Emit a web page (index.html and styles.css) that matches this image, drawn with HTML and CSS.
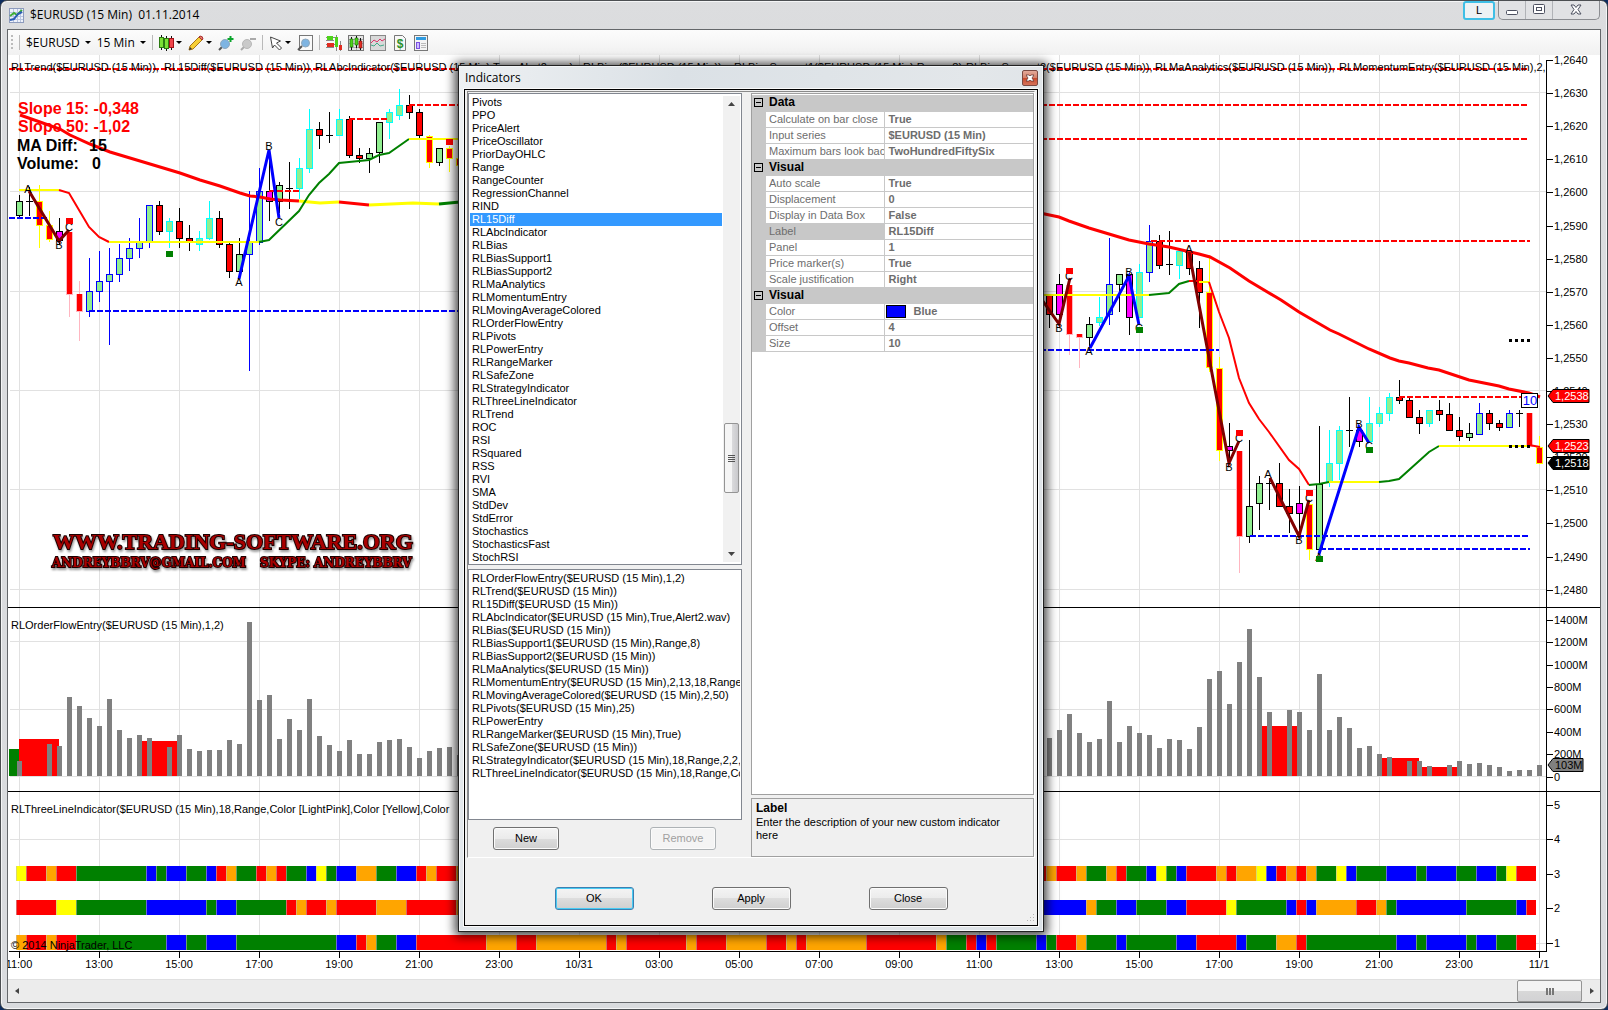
FILE: index.html
```html
<!DOCTYPE html>
<html lang="en">
<head>
<meta charset="utf-8">
<title>$EURUSD (15 Min) 01.11.2014</title>
<link rel="stylesheet" href="styles.css">
</head>
<body>
<main class="window">
  <header class="titlebar">
    <svg class="app-icon" width="15" height="15" viewBox="0 0 15 15"><rect x=".5" y=".5" width="14" height="14" fill="#eef2fb" stroke="#8d9bbd"/><path d="M4.500 1v13M8.500 1v13M11.500 1v13M1 4.500h13M1 8.500h13M1 11.500h13" stroke="#b9c5e0"/><path d="M1 8l4-3 3 2 5-5" fill="none" stroke="#3fae35" stroke-width="2"/><path d="M1 12l4-1 4-5 4-2" fill="none" stroke="#2b5cb5" stroke-width="2"/></svg>
    <h1 class="window-title">$EURUSD (15 Min)&nbsp; 01.11.2014</h1>
    <div class="window-buttons">
      <button class="link-button">L</button>
      <div class="caption-group">
        <button aria-label="Minimize"><svg width="14" height="14" viewBox="0 0 14 14"><rect x="1.500" y="7.500" width="11" height="4" rx="1" fill="#fff" stroke="#4d5160"/></svg></button>
        <button aria-label="Maximize"><svg width="14" height="14" viewBox="0 0 14 14"><rect x="1.500" y="1.500" width="11" height="9" rx="1" fill="#fff" stroke="#4d5160"/><rect x="4.500" y="4.500" width="5" height="3" fill="#fff" stroke="#4d5160"/></svg></button>
        <button class="caption-close" aria-label="Close window"><svg width="14" height="14" viewBox="0 0 14 14"><path d="M2 2h3l2 2.500L9 2h3L9 6.500l3 4.500H9L7 8.500 5 11H2l3-4.500z" fill="#fff" stroke="#4d5160"/></svg></button>
      </div>
    </div>
  </header>
  <div class="client">
    <div class="toolbar">
      <span class="grip"></span><span class="divider"></span>
      <button class="tool-text tool-symbol">$EURUSD <i class="caret"></i></button>
      <button class="tool-text tool-period">15 Min <i class="caret"></i></button>
      <span class="divider"></span>
      <button class="tool" aria-label="Chart style"><svg width="15" height="16" viewBox="0 0 15 16"><path d="M2.500 0v15M7.500 1v15M12.500 1v14" stroke="#111"/><rect x=".5" y="2.500" width="4" height="10" fill="#7be035" stroke="#2c7a12"/><rect x="5.500" y="3.500" width="4" height="10" fill="#7be035" stroke="#2c7a12"/><rect x="10.500" y="3.500" width="4" height="9" fill="#f0444a" stroke="#a01217"/></svg><i class="caret"></i></button>
      <button class="tool" aria-label="Drawing tools"><svg width="16" height="16" viewBox="0 0 16 16"><path d="M2 11L11 2l3 3-9 9-4 1z" fill="#f7cf36" stroke="#a8741a"/><path d="M11 2l3 3 1-1q0-3-3-3z" fill="#e77a6a" stroke="#a33"/><path d="M1 15l1-3 2 2z" fill="#333"/></svg><i class="caret"></i></button>
      <button class="tool tool-zoom" aria-label="Zoom in"><svg width="16" height="16" viewBox="0 0 16 16"><path d="M1 15l4-4" stroke="#555" stroke-width="2"/><circle cx="7" cy="9" r="4.500" fill="#7eb4e2" stroke="#8fa8bd"/><path d="M12.500 1v6M9.500 4h6" stroke="#0ba52c" stroke-width="2"/></svg></button>
      <button class="tool tool-zoom" aria-label="Zoom out"><svg width="16" height="16" viewBox="0 0 16 16"><path d="M1 15l4-4" stroke="#aaa" stroke-width="2"/><circle cx="7" cy="9" r="4.500" fill="#c9c9c9" stroke="#b7b7b7"/><path d="M10 4h6" stroke="#aaa" stroke-width="2"/></svg></button>
      <span class="divider"></span>
      <button class="tool" aria-label="Cursor"><svg width="14" height="16" viewBox="0 0 14 16"><path d="M1.500 2l10 4-4 2 5 5-2 2-5-5-2 3z" fill="#fff" stroke="#444"/></svg><i class="caret"></i></button>
      <button class="tool" aria-label="Data box"><svg width="16" height="16" viewBox="0 0 16 16"><rect x="2.500" y=".5" width="13" height="15" fill="#fafafa" stroke="#777"/><path d="M1 15l4-4" stroke="#555" stroke-width="2"/><circle cx="8.500" cy="8" r="4" fill="#7eb4e2" stroke="#8fa8bd"/></svg></button>
      <span class="divider"></span>
      <button class="tool" aria-label="Data series"><svg width="16" height="16" viewBox="0 0 16 16"><path d="M0 2.500h10M0 9.500h9M10.500 0v16M14.500 6v10M0 5.500h8M0 12.500h8" stroke="#888"/><path d="M1 1h6v4H1z" fill="#4ed31a"/><path d="M1 8h7v4H1zM13 10h3v5h-3z" fill="#e22b20"/><path d="M9 2h3v10H9z" fill="#4ed31a"/></svg></button>
      <button class="tool" aria-label="Indicators"><svg width="16" height="16" viewBox="0 0 16 16"><rect x=".5" y=".5" width="15" height="15" fill="#e5e5e5" stroke="#777"/><path d="M1 4.500h14M1 8.500h14M1 12.500h14M8.500 1v14" stroke="#aaa"/><path d="M3.500 2v13M8.500 1v12M12.500 3v12" stroke="#111"/><path d="M2 4h3v8H2zM7 3h3v7H7z" fill="#4ed31a" stroke="#1d6b0a" stroke-width=".6"/><path d="M11 6h3v7h-3z" fill="#e22b20" stroke="#711" stroke-width=".6"/></svg></button>
      <button class="tool" aria-label="Strategies"><svg width="16" height="16" viewBox="0 0 16 16"><rect x=".5" y=".5" width="15" height="15" fill="#d9d9d9" stroke="#888"/><path d="M1 8l3-3 3 2 3-3 2 2 3-2" fill="none" stroke="#d36"/><path d="M1 10l3 1 3-3 3 3 4-1" fill="none" stroke="#4a8"/></svg></button>
      <button class="tool" aria-label="Performance"><svg width="16" height="16" viewBox="0 0 16 16"><path d="M2.500.5h8l3 3v12h-11z" fill="#f7f7f7" stroke="#777"/><text x="8" y="13" text-anchor="middle" class="dollar">$</text></svg></button>
      <button class="tool" aria-label="Properties"><svg width="14" height="16" viewBox="0 0 14 16"><rect x=".5" y=".5" width="13" height="15" fill="#f4f4f4" stroke="#777"/><path d="M2 2h10v3H2z" fill="#2f9be0"/><rect x="2.500" y="7.500" width="3" height="6" fill="#cdbcff" stroke="#7a4fe0"/><path d="M7 8.500h5M7 10.500h5M7 12.500h5" stroke="#bbb"/></svg></button>
    </div>
    <svg class="chart" id="chart" viewBox="8 55 1592 924" role="img" aria-label="EURUSD price chart"></svg>
    <div class="hscroll">
      <button class="hscroll-arrow" aria-label="Scroll left"><svg width="4" height="6" viewBox="0 0 4 6"><path d="M4 0v6L0 3z" fill="#444"/></svg></button>
      <div class="hscroll-thumb"><i></i><i></i><i></i></div>
      <button class="hscroll-arrow" aria-label="Scroll right"><svg width="4" height="6" viewBox="0 0 4 6"><path d="M0 0v6l4-3z" fill="#444"/></svg></button>
    </div>
  </div>
</main>

<section class="dialog" role="dialog" aria-labelledby="dialog-title">
  <header class="dialog-title">
    <h2 id="dialog-title">Indicators</h2>
    <button class="dialog-close" aria-label="Close dialog"><svg width="8" height="8" viewBox="0 0 8 8"><path d="M0 1h3l1 1 1-1h3L6 4l2 3H5L4 6 3 7H0l2-3z" fill="#fff" stroke="#54292a" stroke-width=".7"/></svg></button>
  </header>
  <div class="dialog-body">
    <div class="dialog-main">
      <div class="left-column">
        <div class="listbox available">
          <select size="36" aria-label="Available indicators">
            <option>Pivots</option><option>PPO</option><option>PriceAlert</option><option>PriceOscillator</option><option>PriorDayOHLC</option><option>Range</option><option>RangeCounter</option><option>RegressionChannel</option><option>RIND</option><option selected>RL15Diff</option><option>RLAbcIndicator</option><option>RLBias</option><option>RLBiasSupport1</option><option>RLBiasSupport2</option><option>RLMaAnalytics</option><option>RLMomentumEntry</option><option>RLMovingAverageColored</option><option>RLOrderFlowEntry</option><option>RLPivots</option><option>RLPowerEntry</option><option>RLRangeMarker</option><option>RLSafeZone</option><option>RLStrategyIndicator</option><option>RLThreeLineIndicator</option><option>RLTrend</option><option>ROC</option><option>RSI</option><option>RSquared</option><option>RSS</option><option>RVI</option><option>SMA</option><option>StdDev</option><option>StdError</option><option>Stochastics</option><option>StochasticsFast</option><option>StochRSI</option>
          </select>
          <div class="vscroll">
            <svg width="7" height="4" viewBox="0 0 7 4"><path d="M0 4h7L3.500 0z" fill="#444"/></svg>
            <div class="vscroll-thumb"><i></i><i></i><i></i><i></i></div>
            <svg width="7" height="4" viewBox="0 0 7 4"><path d="M0 0h7L3.500 4z" fill="#444"/></svg>
          </div>
        </div>
        <div class="listbox applied">
          <select size="18" aria-label="Applied indicators">
            <option>RLOrderFlowEntry($EURUSD (15 Min),1,2)</option><option>RLTrend($EURUSD (15 Min))</option><option>RL15Diff($EURUSD (15 Min))</option><option>RLAbcIndicator($EURUSD (15 Min),True,Alert2.wav)</option><option>RLBias($EURUSD (15 Min))</option><option>RLBiasSupport1($EURUSD (15 Min),Range,8)</option><option>RLBiasSupport2($EURUSD (15 Min))</option><option>RLMaAnalytics($EURUSD (15 Min))</option><option>RLMomentumEntry($EURUSD (15 Min),2,13,18,Range,R</option><option>RLMovingAverageColored($EURUSD (15 Min),2,50)</option><option>RLPivots($EURUSD (15 Min),25)</option><option>RLPowerEntry</option><option>RLRangeMarker($EURUSD (15 Min),True)</option><option>RLSafeZone($EURUSD (15 Min))</option><option>RLStrategyIndicator($EURUSD (15 Min),18,Range,2,2,5)</option><option>RLThreeLineIndicator($EURUSD (15 Min),18,Range,Colo</option>
          </select>
        </div>
        <div class="list-actions">
          <button class="button small">New</button>
          <button class="button small" disabled>Remove</button>
        </div>
      </div>
      <div class="right-column">
        <div class="property-grid">
          <table>
            <colgroup><col class="col-gutter"><col class="col-name"><col></colgroup>
            <tbody>
              <tr class="group"><td><span class="collapse"></span></td><th colspan="2">Data</th></tr>
              <tr><td></td><th>Calculate on bar close</th><td>True</td></tr>
              <tr><td></td><th>Input series</th><td>$EURUSD (15 Min)</td></tr>
              <tr><td></td><th>Maximum bars look back</th><td>TwoHundredFiftySix</td></tr>
            </tbody>
            <tbody>
              <tr class="group"><td><span class="collapse"></span></td><th colspan="2">Visual</th></tr>
              <tr><td></td><th>Auto scale</th><td>True</td></tr>
              <tr><td></td><th>Displacement</th><td>0</td></tr>
              <tr><td></td><th>Display in Data Box</th><td>False</td></tr>
              <tr class="current"><td></td><th>Label</th><td>RL15Diff</td></tr>
              <tr><td></td><th>Panel</th><td>1</td></tr>
              <tr><td></td><th>Price marker(s)</th><td>True</td></tr>
              <tr><td></td><th>Scale justification</th><td>Right</td></tr>
            </tbody>
            <tbody>
              <tr class="group"><td><span class="collapse"></span></td><th colspan="2">Visual</th></tr>
              <tr><td></td><th>Color</th><td class="color-cell"><span class="swatch"></span>Blue</td></tr>
              <tr><td></td><th>Offset</th><td>4</td></tr>
              <tr><td></td><th>Size</th><td>10</td></tr>
            </tbody>
          </table>
        </div>
        <div class="description">
          <h3>Label</h3>
          <p>Enter the description of your new custom indicator here</p>
        </div>
      </div>
    </div>
    <footer class="dialog-footer">
      <button class="button default">OK</button>
      <button class="button">Apply</button>
      <button class="button">Close</button>
      <svg class="resize-grip" width="9" height="9" viewBox="0 0 9 9"><path d="M7 1h1v1H7zM4 4h1v1H4zM7 4h1v1H7zM1 7h1v1H1zM4 7h1v1H4zM7 7h1v1H7z" fill="#b4b4b4"/></svg>
    </footer>
  </div>
</section>
<script src="chart.js"></script>
</body>
</html>
```
FILE: styles.css
```css
* { box-sizing: border-box; }

body {
  margin: 0;
  min-height: 100vh;
  display: flex;
  background: #0d2c5e;
  font: 11px/13px "Liberation Sans", Arial, sans-serif;
  color: #000;
}

button {
  margin: 0;
  padding: 0;
  border: 0;
  background: none;
  font: inherit;
  color: inherit;
}

h1, h2, h3, p { margin: 0; font-weight: normal; }

.window {
  flex: 1;
  display: flex;
  flex-direction: column;
  padding: 0 7px 6px;
  border: 1px solid #4c4f52;
  border-radius: 7px;
  background: linear-gradient(#dcdddf, #dbdcde 30px, #d9dbde);
  box-shadow: inset 0 0 0 1px #f4f5f6;
}

/* Title bar */
.titlebar {
  display: flex;
  height: 28px;
  align-items: center;
  gap: 6px;
  padding-left: 1px;
}
.window-title {
  flex: 1;
  font: 12px/16px "Open Sans", sans-serif;
}
.window-buttons { display: flex; align-self: flex-start; gap: 3px; }
.link-button {
  width: 32px;
  height: 19px;
  border: 2px solid #3fbfe6;
  border-radius: 3px;
  background: #eef2f4;
}
.caption-group {
  display: flex;
  height: 19px;
  border: 1px solid #8b8d91;
  border-top: 0;
  border-radius: 0 0 5px 5px;
  background: #e1e2e4;
}
.caption-group button {
  width: 27px;
  display: grid;
  place-items: center;
  border-right: 1px solid #b1b3b7;
}
.caption-group .caption-close { width: 46px; border-right: 0; }

/* Client area */
.client {
  flex: 1;
  display: flex;
  flex-direction: column;
  border: 1px solid #64676a;
  margin: 0 -1px;
  background: #fff;
}
.toolbar {
  display: flex;
  align-items: center;
  height: 25px;
  padding-left: 3px;
  gap: 6px;
  background: linear-gradient(#fcfcfc, #f1f1f1);
}
.grip { width: 2px; height: 15px; background: repeating-linear-gradient(#bbb 0 2px, transparent 2px 4px); }
.divider { width: 1px; height: 15px; background: #b9b9b9; }
.tool-text {
  display: flex;
  align-items: center;
  gap: 5px;
  font: 12px/16px "Open Sans", sans-serif;
}
.tool { display: flex; align-items: center; gap: 2px; }
.caret {
  width: 0;
  border: 3px solid transparent;
  border-top-color: #000;
  border-bottom: 0;
}
.dollar { font: bold 12px "Liberation Sans", sans-serif; fill: #2a8f2a; }

.chart { display: block; width: 100%; flex: 1; }
.chart text { font: 11px "Liberation Sans", Arial, sans-serif; }
.chart .stat { font-size: 16px; font-weight: bold; }
.chart .box { font-size: 13px; fill: #0000ff; }
.chart .brand, .chart .contact {
  fill: #a80000;
  stroke: #1c0000;
  stroke-width: 2px;
  paint-order: stroke;
  filter: drop-shadow(1px 2px 1px rgba(0, 0, 0, .4));
}
.chart .brand { font: bold 22px "Liberation Serif", serif; }
.chart .contact { font: bold 12px "DejaVu Serif", serif; }

.hscroll {
  display: flex;
  height: 23px;
  border-top: 1px solid #e0e0e0;
  background: #ececec;
}
.hscroll-arrow { width: 17px; display: grid; place-items: center; }
.hscroll-thumb {
  width: 65px;
  height: 22px;
  margin-left: auto;
  margin-right: 1px;
  display: flex;
  align-items: center;
  justify-content: center;
  gap: 1px;
  border: 1px solid #949494;
  border-radius: 2px;
  background: linear-gradient(#f3f3f3 50%, #d8d8d8 50%, #d2d2d4);
}
.hscroll-thumb i { width: 2px; height: 7px; background: #777; }

/* Indicators dialog */
.dialog {
  position: absolute;
  left: 458px;
  top: 65px;
  width: 586px;
  display: flex;
  flex-direction: column;
  padding: 0 5px 5px;
  border: 1px solid #222;
  background: linear-gradient(100deg, #eef1f3, #dbe1e6 30%, #e3e7ea 70%, #dbe1e6) #dde3e8;
  box-shadow: inset 0 0 0 1px #f3f6f8, 0 1px 10px 3px rgba(0, 0, 0, .75);
}
.dialog-title {
  display: flex;
  align-items: center;
  justify-content: space-between;
  height: 23px;
  padding-left: 1px;
}
.dialog-title h2 { font: 12px/16px "Open Sans", sans-serif; }
.dialog-close {
  width: 16px;
  height: 16px;
  display: grid;
  place-items: center;
  border: 1px solid #7b4942;
  border-radius: 2px;
  background: linear-gradient(#e3aa9b, #d47f67 50%, #c8482b 50%, #d5735a);
}
.dialog-body {
  border: 1px solid #000;
  outline: 1px solid #fafafa;
  padding: 1px 2px;
  background: #f0f0f0;
}
.dialog-main {
  display: flex;
  gap: 9px;
  padding: 1px 0 0;
  border: 1px solid #8a8a8a;
  border-right-color: #fff;
  border-bottom-color: #fff;
}
.left-column { width: 274px; display: flex; flex-direction: column; gap: 4px; }
.listbox {
  display: flex;
  padding: 2px 1px;
  border: 1px solid #828790;
  background: #fff;
}
.available { height: 472px; }
.applied { height: 251px; }
.listbox select {
  flex: 1;
  min-width: 0;
  height: 100%;
  padding: 0;
  border: 0;
  outline: 0;
  overflow: hidden;
  background: #fff;
  color: #000;
  font: inherit;
  appearance: none;
}
.listbox option {
  height: 13px;
  min-height: 13px;
  padding: 0 2px;
  line-height: 13px;
}
.listbox option:checked { background: #3399ff linear-gradient(#3399ff, #3399ff); color: #fff; }
.vscroll {
  width: 17px;
  margin-left: 1px;
  display: flex;
  flex-direction: column;
  align-items: center;
  justify-content: space-between;
  padding: 6px 1px;
  background: #f1f1f1;
}
.vscroll-thumb {
  width: 15px;
  height: 70px;
  margin-top: 317px;
  display: flex;
  flex-direction: column;
  align-items: center;
  justify-content: center;
  gap: 1px;
  border: 1px solid #949494;
  border-radius: 2px;
  background: linear-gradient(90deg, #f5f5f5 50%, #dcdcde 50%, #c9c9cc);
}
.vscroll-thumb i { width: 7px; height: 1px; background: #555; }
.vscroll-thumb + svg { margin-top: auto; }
.list-actions { display: flex; justify-content: space-between; padding: 3px 26px 7px 25px; }

.button {
  width: 79px;
  height: 23px;
  border: 1px solid #707070;
  border-radius: 3px;
  background: linear-gradient(#f4f4f4, #ebebeb 50%, #dddddd 50%, #cfcfcf);
  box-shadow: inset 0 0 0 1px #fbfbfb;
}
.button.small { width: 66px; }
.button.default { border-color: #3c7fb1; box-shadow: inset 0 0 0 1px #48cbf3; }
.button:disabled { border-color: #adb2b5; background: #f4f4f4; color: #a0a0a0; }

.right-column { flex: 1; min-width: 0; display: flex; flex-direction: column; gap: 3px; }
.property-grid {
  flex: 1;
  padding-top: 1px;
  border: 1px solid #a0a0a0;
  background: #fff;
}
.property-grid table { width: 100%; border-collapse: collapse; table-layout: fixed; }
.col-gutter { width: 14px; }
.col-name { width: 118px; }
.property-grid tr { height: 16px; }
.property-grid td, .property-grid th {
  padding: 0 0 0 3px;
  border: solid #c8c8c8;
  border-width: 0 0 1px;
  height: 16px;
  line-height: 15px;
  font-weight: normal;
  text-align: left;
  color: #6d6d6d;
  white-space: nowrap;
  overflow: hidden;
}
.property-grid td:first-child { padding-left: 2px; background: #c8c8c8; }
.property-grid th { border-right-width: 1px; }
.property-grid td:last-child { padding-left: 4px; font-weight: bold; }
.property-grid .group th { background: #c8c8c8; color: #000; font-weight: bold; font-size: 12px; }
.property-grid .current th { background: #c8c8c8; }
.property-grid .color-cell:last-child { padding-left: 1px; }
.collapse {
  display: block;
  width: 9px;
  height: 9px;
  border: 1px solid #000;
  background: linear-gradient(#000, #000) center / 5px 1px no-repeat;
}
.swatch {
  display: inline-block;
  width: 20px;
  height: 13px;
  margin-right: 8px;
  border: 1px solid #000;
  background: #00f;
  vertical-align: middle;
}
.description {
  height: 59px;
  padding: 2px 20px 0 4px;
  border: 1px solid #a0a0a0;
}
.description h3 { font-size: 12px; font-weight: bold; line-height: 15px; }
.dialog-footer {
  position: relative;
  display: flex;
  justify-content: center;
  gap: 78px;
  padding: 29px 0 14px;
}
.resize-grip { position: absolute; right: 0; bottom: 2px; }
```
FILE: chart.js
```js
const NS = 'http://www.w3.org/2000/svg';
const chart = document.getElementById('chart');
const barX = i => 19 + 10 * i;

function add(tag, attrs, text) {
  const node = document.createElementNS(NS, tag);
  for (const key in attrs) node.setAttribute(key, attrs[key]);
  if (text !== undefined) node.textContent = text;
  chart.appendChild(node);
  return node;
}
function rect(x, y, w, h, fill) { add('rect', { x, y, width: w, height: h, fill }); }
function label(x, y, text, attrs = {}) { add('text', { x, y, ...attrs }, text); }
function line(points, stroke, width, attrs = {}) {
  add('polyline', { points, stroke, fill: 'none', 'stroke-width': width, ...attrs });
}
function dash(x1, x2, y, stroke) { line(`${x1},${y} ${x2},${y}`, stroke, 2, { 'stroke-dasharray': '6 2' }); }

rect(8, 55, 1592, 924, '#fff');

// Grid
for (let x = 19; x < 1546; x += 80) rect(x, 55, 1, 896, '#e1e1e1');
for (const y of [92, 191, 291, 390, 489, 589, 641, 709, 776, 839, 943]) rect(10, y, 1536, 1, '#e1e1e1');

// Volume blocks and bars
const blocks = [[9, 10, 749, 'green'], [19, 40, 739, 'red'], [142, 35, 741, 'red'], [1262, 35, 726, 'red'], [1382, 37, 758, 'red'], [1422, 35, 767, 'red']];
for (const [x, w, y, fill] of blocks) rect(x, y, w, 776 - y, fill);
const volume = {
  0: [761, , , 744, 746, 697, 706, 718, 726, 699, 730, 738, 735, 738, , 747, 735, 749, 751, 750, 750, 740, 744, 622, 700, 695, 739, 719, 730, 699, 736, 745, 751, 740, 754, 754, 742, 740, 739, 747, 758, 751, 748, 747, 755],
  103: [738, 730, 714, 733, 742, 739, 701, 742, 726, 733, 735, 748, 739, 740, 749, 727, 679, 671, 704, 662, 629, 677, 712, , 710, 712, 730, 674, 730, 717, 728, 748, 746, 754, 757, , 761, 761, 766, , 765, 761, 764, 763, 765, 767, 771, 770, 770, 765]
};
for (const start in volume) volume[start].forEach((y, n) => rect(barX(+start + n) - 2, y, 5, 776 - y, 'gray'));

// Three line indicator: colour letter followed by the number of bars
const strips = [
  [866, 0, 'y1r2o1r2g7b1g1b2g2b1r1o1g2r1o1r1g2b1y1g1b2o2g2b2r1o1r2o1'],
  [866, 102, 'r1o1r2o1g2o1r1g2b1y1g1b1r3o1r1o2y1b1r1o1r1o1g2y1b1g3b3g1b3g2b2g1y1r2'],
  [900, 0, 'r4y2g7b6g1b2g5r1o1r2o1r4o3r5o1'],
  [900, 102, 'b5o1g2b2g3b2r4y1g5b1r1b1o4r2o1g1b7g5b1r1'],
  [935, 0, 'o1r2o1r2g9b2g2b3g10b2r1o1g2b2r7o3r2o7r1o1r6o1r3o4r2o1r1o6r7o1g2r1b1r1g4b1g1r2o1g3b1g5b2r4b1g3o2r1g9b2g1b4g1b2g2r2']
];
const stripFill = { y: '#ffff00', r: '#ff0000', o: '#ffa500', g: '#008000', b: '#0000ff' };
for (const [y, start, runs] of strips) {
  let k = start;
  for (const [, c, n] of runs.matchAll(/([a-z])(\d+)/g)) {
    rect(16 + 10 * k, y, 10 * n, 15, stripFill[c]);
    rect(16 + 10 * k, y, 1, 15, 'rgba(190,190,190,.55)');
    k += +n;
  }
}

// Candles: bar, high, low, body top, body bottom, kind
const candles = [
  [0,195,217,201,215,'G'],[1,187,216,201,201,'D'],[2,185,248,201,225,'Y'],[3,211,242,225,239,'Y'],[4,218,245,231,240,'M'],[5,232,317,232,294,'P'],[6,281,341,294,311,'P'],[7,258,317,291,311,'B'],[8,251,302,281,291,'B'],[9,248,345,274,281,'B'],[10,244,282,258,274,'B'],[11,238,271,248,258,'B'],[12,218,258,242,248,'B'],[13,205,248,205,242,'B'],[14,201,235,205,231,'R'],[15,218,248,221,231,'C'],[16,208,248,221,238,'R'],[17,225,251,238,241,'R'],[18,231,251,238,244,'C'],[19,201,240,218,238,'C'],[20,211,248,218,244,'R'],[21,242,278,244,271,'R'],[22,238,276,254,271,'G'],[23,191,371,242,254,'B'],[24,168,245,191,242,'B'],[25,150,221,191,201,'M'],[26,182,213,185,201,'G'],[27,162,209,188,188,'D'],[28,158,199,168,188,'C'],[29,109,173,129,168,'C'],[30,122,149,129,135,'R'],[31,112,143,135,135,'D'],[32,109,136,119,135,'C'],[33,116,158,119,155,'R'],[34,148,163,155,158,'R'],[35,148,173,153,158,'G'],[36,122,163,122,152,'G'],[37,109,139,112,122,'C'],[38,89,120,105,115,'C'],[39,95,119,105,112,'R'],[40,109,138,112,135,'R'],[41,135,168,136,162,'Y'],[42,148,166,148,162,'G'],[43,146,172,148,158,'Y'],[44,155,168,158,165,'Y'],
  [103,295,328,295,314,'R'],[104,274,324,284,314,'M'],[105,285,355,285,334,'P'],[106,334,368,334,337,'P'],[107,317,348,324,337,'G'],[108,297,326,317,322,'C'],[109,238,325,284,314,'B'],[110,274,312,274,284,'G'],[111,274,335,274,317,'M'],[112,264,317,272,317,'C'],[113,225,282,241,272,'B'],[114,235,269,241,265,'R'],[115,231,275,264,264,'D'],[116,251,279,251,265,'C'],[117,250,275,252,268,'R'],[118,261,328,268,292,'R'],[119,255,372,292,367,'Y'],[120,357,461,368,450,'Y'],[121,423,463,446,450,'M'],[122,451,573,451,536,'P'],[123,440,543,506,536,'G'],[124,476,530,483,503,'G'],[125,478,510,483,483,'D'],[126,463,507,483,506,'R'],[127,489,533,506,513,'R'],[128,486,537,503,513,'M'],[129,500,560,504,549,'Y'],[130,426,551,484,549,'G'],[131,430,487,463,482,'C'],[132,426,480,430,463,'C'],[133,397,447,430,430,'D'],[134,427,447,430,441,'M'],[135,397,443,423,441,'C'],[136,407,427,413,423,'C'],[137,393,421,397,413,'C'],[138,380,404,397,400,'R'],[139,397,417,400,417,'R'],[140,410,434,417,423,'R'],[141,410,427,410,423,'C'],[142,400,421,410,414,'R'],[143,403,431,414,430,'R'],[144,417,441,430,436,'R'],[145,423,441,433,437,'G'],[146,403,434,413,434,'B'],[147,410,430,413,423,'R'],[148,420,431,423,427,'R'],[149,410,427,413,427,'B'],[150,410,427,413,413,'D'],[151,413,446,413,446,'P'],[152,436,463,447,463,'Y']
];
const kinds = {
  G: ['#000', '#90ee90'], R: ['#000', '#ff0000'], M: ['#000', '#ff00ff'], B: ['#0000ff', '#90ee90'],
  C: ['#00ffff', '#90ee90'], Y: ['#ffff00', '#ff0000'], P: ['#ffb6c1', '#ff0000'], D: ['#000', '#000']
};
for (const [i, high, low, top, bottom, kind] of candles) {
  const [edge, fill] = kinds[kind];
  const x = barX(i);
  rect(x, high, 1, low - high, edge);
  rect(x - 3, top, 7, Math.max(1, bottom - top + 1), edge);
  if (bottom - top > 1) {
    if (kind === 'P') rect(x - 2, top, 5, bottom - top, fill);
    else rect(x - 2, top + 1, 5, bottom - top - 1, fill);
  }
}

// Support, resistance and pivot levels
dash(9, 1529, 69, '#ff0000');
dash(409, 1529, 105, '#ff0000');
dash(349, 389, 119, '#ff0000');
dash(269, 300, 191, '#ff0000');
dash(449, 1529, 139, '#ff0000');
dash(1151, 1530, 241, '#ff0000');
dash(1399, 1530, 397, '#ff0000');
dash(9, 49, 218, '#0000ff');
dash(89, 459, 311, '#0000ff');
dash(1040, 1219, 350, '#0000ff');
dash(1250, 1528, 536, '#0000ff');
dash(1320, 1530, 549, '#0000ff');

// Slow average
line('20,115 40,122 60,129 70,135 90,144 110,152 140,161 180,173 200,180 220,186 240,193 250,196 260,197 270,199 280,200 299,201', '#ff0000', 3);
line('299,201 320,203 339,202', '#ffff00', 3);
line('339,202 369,205', '#ff0000', 3);
line('369,205 413,203 439,204', '#ffff00', 3);
line('439,204 460,202', '#008000', 3);
line('1040,213 1059,217 1069,221 1089,228 1129,240 1149,244 1169,247 1199,254 1210,257 1230,268 1249,281 1281,300 1299,312 1330,330 1339,334 1369,349 1390,358 1399,361 1409,363 1428,368 1439,370 1469,380 1499,386 1509,389 1529,393 1540,397', '#ff0000', 3);

// Fast average
line('19,190 59,190', '#ffff00', 2);
line('59,190 69,193 79,210 89,227 99,237 109,242', '#ff0000', 2);
line('109,242 259,242', '#ffff00', 2);
line('259,242 269,240 299,211 309,195 319,183 329,174 339,163 349,162 369,160 379,155 389,153 409,139', '#008000', 2);
line('409,139 460,139', '#ffff00', 2);
line('1040,295 1149,295', '#ffff00', 2);
line('1149,295 1169,293 1179,284 1189,281', '#008000', 2);
line('1189,281 1199,281', '#ff0000', 2);
line('1199,282 1209,282', '#ffff00', 2);
line('1209,282 1219,312 1229,338 1239,378 1249,403 1259,419 1269,432 1289,460 1299,469 1309,485', '#ff0000', 2);
line('1309,485 1319,484 1329,482', '#008000', 2);
line('1329,482 1379,482', '#ffff00', 2);
line('1379,482 1389,481 1399,479 1429,452 1439,446', '#008000', 2);
line('1439,446 1529,446', '#ffff00', 2);
line('1529,445 1540,447', '#ff0000', 2);
for (const y of [340, 446]) for (let x = 1509; x < 1530; x += 6) rect(x, y - 1, 3, 3, '#000');

// ABC swings
for (const p of ['29,191 59,241 69,230', '1040,297 1059,324 1070,278', '1189,252 1229,463 1239,441', '1270,478 1299,536 1309,500']) line(p, '#800000', 3);
for (const p of ['239,279 269,150 279,218', '1090,348 1129,276 1139,325', '1319,554 1359,427 1369,443']) line(p, '#0000ff', 3);
for (const [t, x, y] of [['A',28,189],['B',59,245],['C',69,227],['B',269,146],['A',239,282],['C',279,222],['C',1069,276],['B',1059,328],['A',1089,351],['B',1129,272],['C',1139,328],['A',1189,249],['B',1229,467],['C',1239,438],['A',1268,474],['B',1299,540],['C',1309,498],['A',1319,557],['B',1359,424],['C',1369,446]]) label(x, y + 4, t, { 'text-anchor': 'middle' });
for (const [x, y, c] of [[69,221,'red'],[449,142,'red'],[169,254,'green'],[1069,271,'red'],[1239,433,'red'],[1309,493,'red'],[1139,330,'green'],[1369,450,'green'],[1319,559,'green']]) rect(x - 3, y - 3, 7, 6, c);

// Statistics
label(18, 114, 'Slope 15: -0,348', { class: 'stat', fill: 'red' });
label(18, 132, 'Slope 50: -1,02', { class: 'stat', fill: 'red' });
label(17, 151, 'MA Diff:', { class: 'stat' });
label(89, 151, '15', { class: 'stat' });
label(17, 169, 'Volume:', { class: 'stat' });
label(92, 169, '0', { class: 'stat' });

// Panel captions
for (const [x, t] of [[11, 'RLTrend($EURUSD (15 Min)),'], [164, 'RL15Diff($EURUSD (15 Min)),'], [315, 'RLAbcIndicator($EURUSD (15 Min),True,Alert2.wav),'], [583, 'RLBias($EURUSD (15 Min)),'], [734, 'RLBiasSupport1($EURUSD (15 Min),Range,8),'], [966, 'RLBiasSupport2($EURUSD (15 Min)),'], [1155, 'RLMaAnalytics($EURUSD (15 Min)),'], [1339, 'RLMomentumEntry($EURUSD (15 Min),2,']]) label(x, 71, t);
label(11, 629, 'RLOrderFlowEntry($EURUSD (15 Min),1,2)');
label(11, 813, 'RLThreeLineIndicator($EURUSD (15 Min),18,Range,Color [LightPink],Color [Yellow],Color');
label(11, 949, '© 2014 NinjaTrader, LLC');
label(53, 549, 'WWW.TRADING-SOFTWARE.ORG', { class: 'brand' });
label(52, 567, 'ANDREYBBRV@GMAIL.COM', { class: 'contact' });
label(260, 567, 'SKYPE: ANDREYBBRV', { class: 'contact' });

// Axes
rect(8, 607, 1592, 1, '#000');
rect(8, 791, 1592, 1, '#000');
rect(1546, 60, 1, 892, '#000');
rect(9, 951, 1538, 1, '#000');
const ticks = [];
for (let n = 0; n <= 16; n++) ticks.push([60 + Math.round(33.1 * n), '1,' + (2640 - 10 * n)]);
[1400, 1200, 1000, 800, 600, 400, 200].forEach((v, n) => ticks.push([Math.round(620 + 22.3 * n), v + 'M']));
ticks.push([777, '0'], [805, '5'], [839, '4'], [874, '3'], [908, '2'], [943, '1']);
for (const [y, t] of ticks) { rect(1546, y, 7, 1, '#000'); label(1554, y + 4, t); }
['11:00','13:00','15:00','17:00','19:00','21:00','23:00','10/31','03:00','05:00','07:00','09:00','11:00','13:00','15:00','17:00','19:00','21:00','23:00','11/1'].forEach((t, n) => {
  const x = 19 + 80 * n;
  rect(x, 952, 1, 6, '#000');
  label(x, 968, t, { 'text-anchor': 'middle' });
});

// Price markers
for (const [y, t, fill, ink, right] of [[396, '1,2538', 'red', '#fff', 1589], [446, '1,2523', 'red', '#fff', 1589], [463, '1,2518', '#000', '#fff', 1589], [765, '103M', 'gray', '#000', 1583]]) {
  add('path', { d: `M1548 ${y}l5 -6.500H${right}v13H1553z`, fill, stroke: '#000' });
  label(1555, y + 4, t, { fill: ink });
}
add('rect', { x: 1521.5, y: 393.5, width: 16, height: 14, fill: '#fff', stroke: '#000' });
label(1530, 405, '10', { class: 'box', 'text-anchor': 'middle' });
```
